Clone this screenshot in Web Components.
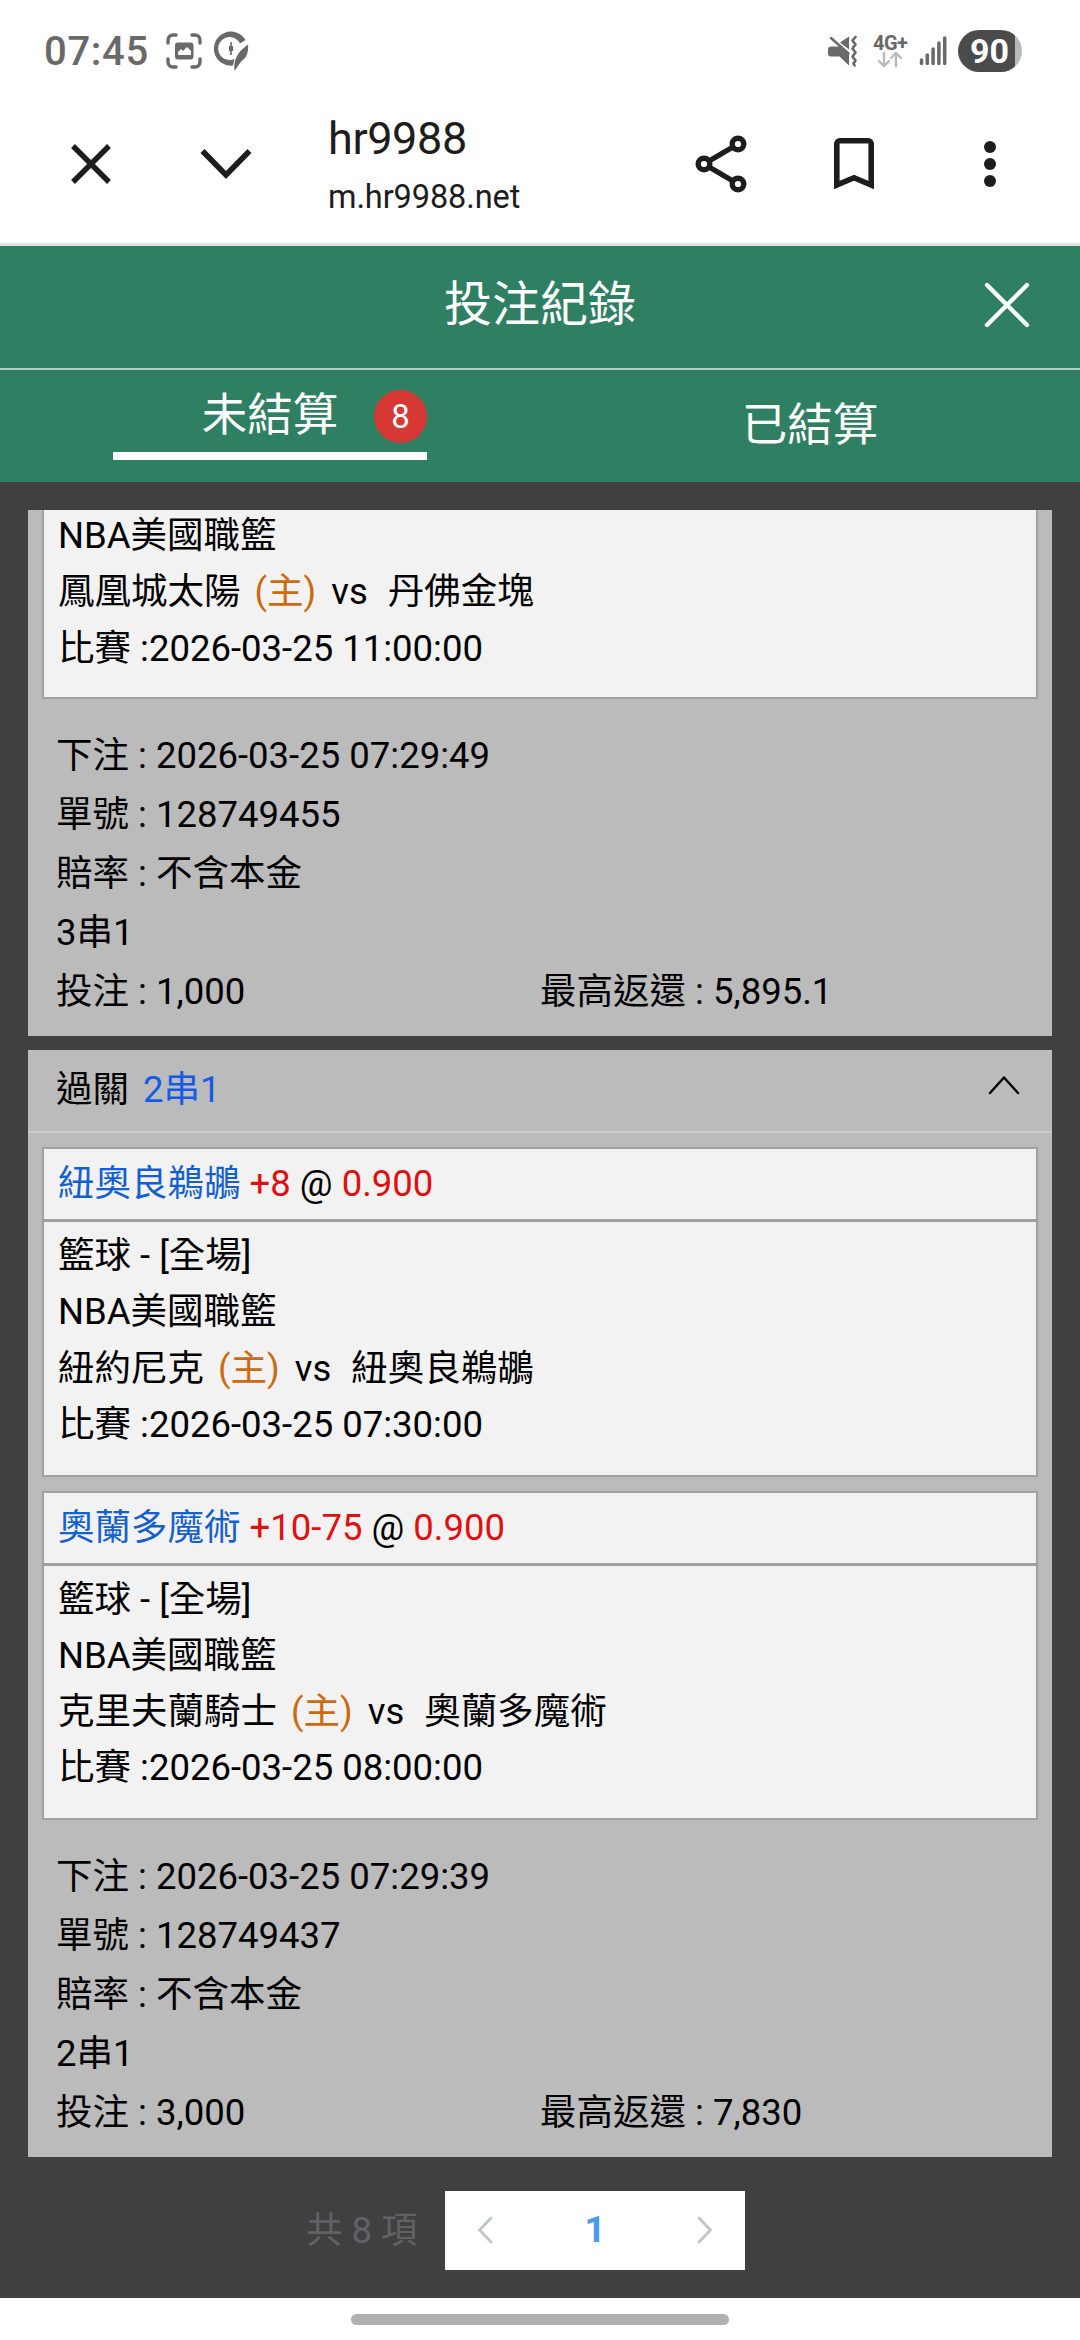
<!DOCTYPE html>
<html lang="zh-Hant">
<head>
<meta charset="utf-8">
<title>hr9988</title>
<style>
  html, body {
    margin: 0;
    height: 100%;
  }

  body {
    font-family: Roboto, "Noto Sans CJK TC", sans-serif;
    background: #fff;
    overflow: hidden;
  }
</style>
</head>
<body>
<bet-app></bet-app>

<script>
const BETS = [
  {
    partial: true,
    legs: [
      {
        league: "NBA美國職籃",
        home: "鳳凰城太陽",
        away: "丹佛金塊",
        date: "2026-03-25 11:00:00"
      }
    ],
    placed: "2026-03-25 07:29:49",
    order: "128749455",
    combo: "3串1",
    stake: "1,000",
    payout: "5,895.1"
  },
  {
    legs: [
      {
        pick: "紐奧良鵜鶘",
        line: "+8",
        odds: "0.900",
        sport: "籃球 - [全場]",
        league: "NBA美國職籃",
        home: "紐約尼克",
        away: "紐奧良鵜鶘",
        date: "2026-03-25 07:30:00"
      },
      {
        pick: "奧蘭多魔術",
        line: "+10-75",
        odds: "0.900",
        sport: "籃球 - [全場]",
        league: "NBA美國職籃",
        home: "克里夫蘭騎士",
        away: "奧蘭多魔術",
        date: "2026-03-25 08:00:00"
      }
    ],
    placed: "2026-03-25 07:29:39",
    order: "128749437",
    combo: "2串1",
    stake: "3,000",
    payout: "7,830"
  }
];

class BaseElement extends HTMLElement {
  constructor() {
    super();
    this.attachShadow({ mode: "open" });
  }

  connectedCallback() {
    this.shadowRoot.innerHTML = /* html */`
    <style>${this.constructor.styles}</style>
    ${this.render()}`;
  }
}

class StatusBar extends BaseElement {
  static get styles() {
    return /* css */`
      :host {
        display: flex;
        align-items: center;
        box-sizing: border-box;
        height: 102px;
        padding: 0 58px 0 44px;
        color: #696969;
      }

      svg {
        display: block;
        flex: none;
      }

      .time {
        width: 122px;
        padding-top: 2px;
        font-size: 40px;
        font-weight: 500;
        letter-spacing: 0.7px;
        line-height: 42px;
      }

      .bubble {
        margin-left: 11px;
      }

      .mute {
        margin-left: auto;
      }

      .network {
        width: 36px;
        margin-left: 15px;
        font-size: 20px;
        font-weight: 700;
        line-height: 18px;
        letter-spacing: -0.5px;
      }

      .signal {
        margin: 0 10px 0 10px;
      }

      .battery {
        width: 64px;
        height: 42px;
        border-radius: 21px;
        background: linear-gradient(90deg, #4b4b4b 57px, #b9b9b9 57px);
        color: #fff;
        font-size: 34px;
        font-weight: 700;
        line-height: 43px;
        text-indent: 12px;
      }
    `;
  }

  render() {
    return /* html */`
    <span class="time">07:45</span>
    <svg width="36" height="36" viewBox="0 0 36 36" fill="none">
      <path d="M2 10V7a5 5 0 0 1 5-5h3M26 2h3a5 5 0 0 1 5 5v3M34 26v3a5 5 0 0 1-5 5h-3M10 34H7a5 5 0 0 1-5-5v-3" stroke="currentColor" stroke-width="3.4" stroke-linecap="round"/>
      <rect x="9" y="9.500" width="18.500" height="17" rx="3" fill="currentColor"/>
      <path d="M12 22v-3l3-3 2 2 4-4 4 4v4z" fill="#fff"/>
    </svg>
    <svg class="bubble" width="36" height="40" viewBox="0 0 36 40">
      <path d="M32.500 9A17 17 0 1 0 20 34.500L21.500 28A11.500 11.500 0 1 1 27 12.500z" fill="currentColor"/>
      <path d="M35 13.500c1 8-2 14-7 17l-6.500 9.500c-1-10 1.500-18 13.500-26.500z" fill="currentColor"/>
      <path d="M18 11v13M16.800 15v5M19.200 15v5" stroke="currentColor" stroke-width="1.600"/>
    </svg>
    <svg class="mute" width="31" height="32" viewBox="0 0 31 32">
      <path d="M4 11.500h8L22 18v12.500L12.500 21.500H4q-3 0-3-3v-4q0-3 3-3zM13 7.500l9-6v13z" fill="currentColor"/>
      <path d="M4 3l17.500 15.500" stroke="currentColor" stroke-width="2.400" stroke-linecap="round"/>
      <path d="M28.500 2l-3 3.500 3 4-3 4 3 4-3 4 3 4-2 3 1 2" fill="none" stroke="currentColor" stroke-width="2.600" stroke-linecap="round" stroke-linejoin="round"/>
    </svg>
    <div class="network">4G+
      <svg width="36" height="16" viewBox="0 0 36 16" fill="none" stroke="#b9b9b9" stroke-width="2.400" stroke-linecap="round">
        <path d="M11 1v13M6 9l5 5 5-5M23 14V1M18 6l5-5 5 5"/>
      </svg>
    </div>
    <svg class="signal" width="29" height="30" viewBox="0 0 29 30" stroke="currentColor" stroke-width="3.500" stroke-linecap="round">
      <path d="M2.500 24v3.500M8.300 19v8.500M14.100 13v14.500M19.900 7v20.500M25.700 2v25.500"/>
    </svg>
    <div class="battery">90</div>`;
  }
}

class BrowserBar extends BaseElement {
  static get styles() {
    return /* css */`
      :host {
        display: flex;
        align-items: center;
        box-sizing: border-box;
        height: 144px;
        padding: 0 81px 17px 71px;
        border-bottom: 3px solid #dfe3e3;
        color: #1d1d1d;
      }

      svg {
        display: block;
        flex: none;
      }

      .down {
        margin-left: 89px;
      }

      .page {
        flex: 1;
        margin-left: 76px;
        padding-top: 8px;
      }

      .title {
        font-size: 45px;
        line-height: 58px;
        letter-spacing: -0.4px;
      }

      .host {
        font-size: 32.5px;
        line-height: 58px;
        letter-spacing: -0.1px;
      }

      .mark {
        margin: 0 107px 0 87px;
      }
    `;
  }

  render() {
    return /* html */`
    <svg width="40" height="40" viewBox="0 0 40 40" stroke="currentColor" stroke-width="5.400">
      <path d="M2 2l36 36M38 2L2 38"/>
    </svg>
    <svg class="down" width="52" height="32" viewBox="0 0 52 32" fill="none" stroke="currentColor" stroke-width="5.600">
      <path d="M2.500 3L26 27 49.500 3"/>
    </svg>
    <div class="page">
      <div class="title">hr9988</div>
      <div class="host">m.hr9988.net</div>
    </div>
    <svg width="52" height="58" viewBox="0 0 52 58" fill="none" stroke="currentColor" stroke-width="5.400">
      <path d="M9 29l34-20M9 29l34 20"/>
      <g fill="#fff">
        <circle cx="9" cy="29" r="5.800"/>
        <circle cx="43" cy="9" r="5.800"/>
        <circle cx="43" cy="49" r="5.800"/>
      </g>
    </svg>
    <svg class="mark" width="40" height="52" viewBox="0 0 40 52" fill="none" stroke="currentColor" stroke-width="5.600">
      <path d="M2.800 47V5.800a3 3 0 0 1 3-3h28.400a3 3 0 0 1 3 3V47L20 39.700z"/>
    </svg>
    <svg width="18" height="50" viewBox="0 0 18 50" fill="currentColor">
      <circle cx="9" cy="8" r="6"/>
      <circle cx="9" cy="25" r="6"/>
      <circle cx="9" cy="42" r="6"/>
    </svg>`;
  }
}

class RecordHeader extends BaseElement {
  static get styles() {
    return /* css */`
      :host {
        display: grid;
        grid-template-columns: 1fr auto 1fr;
        align-items: center;
        box-sizing: border-box;
        height: 124px;
        padding-bottom: 4px;
        border-bottom: 2px solid #afd0c3;
        background: #2f7f63;
        color: #fff;
      }

      .title {
        grid-column: 2;
        font-size: 48px;
        line-height: 70px;
      }

      svg {
        display: block;
        justify-self: end;
        margin-right: 49px;
      }
    `;
  }

  render() {
    return /* html */`
    <div class="title"><slot></slot></div>
    <svg width="48" height="48" viewBox="0 0 48 48" stroke="currentColor" stroke-width="4.400" stroke-linecap="round">
      <path d="M4 4l40 40M44 4L4 44"/>
    </svg>`;
  }
}

class RecordTabs extends BaseElement {
  static get styles() {
    return /* css */`
      :host {
        display: grid;
        grid-template-columns: 1fr 1fr;
        height: 112px;
        background: #2f7f63;
        color: #fff;
        font-size: 45.5px;
      }

      .tab {
        display: flex;
        align-items: center;
        justify-content: center;
        padding-bottom: 10px;
      }

      .active {
        box-sizing: border-box;
        width: 314px;
        height: 90px;
        margin-left: 113px;
        padding-bottom: 0;
        border-bottom: 8px solid #fff;
        position: relative;
      }

      .badge {
        position: absolute;
        top: 20px;
        right: 0;
        width: 53px;
        height: 53px;
        border-radius: 50%;
        background: #d63833;
        font-size: 33px;
        line-height: 53px;
        text-align: center;
      }
    `;
  }

  render() {
    return /* html */`
    <div class="tab active">未結算<span class="badge">8</span></div>
    <div class="tab">已結算</div>`;
  }
}

class BetLeg extends BaseElement {
  static get styles() {
    return /* css */`
      :host {
        display: block;
        margin: 0 14px;
        border: 2px solid #a0a0a0;
        background: #f2f2f2;
      }

      :host([partial]) {
        border-top: 0;
      }

      .pick {
        height: 70px;
        padding-left: 14px;
        border-bottom: 3px solid #a0a0a0;
        line-height: 69px;
      }

      .team {
        color: #1560d0;
      }

      .odds {
        color: #e01010;
      }

      .body {
        padding: 6px 14px 21.5px;
        line-height: 56.25px;
      }

      :host([partial]) .body {
        height: 189px;
        padding: 0 14px;
        margin-top: -2px;
      }

      .home {
        margin: 0 15px 0 14px;
        color: #cb6a10;
      }

      .away {
        margin-left: 20px;
      }
    `;
  }

  render() {
    const { pick, line, odds, sport, league, home, away, date } = this.data;
    const head = pick ? `<div class="pick"><span class="team">${pick}</span> <span class="odds">${line}</span> @ <span class="odds">${odds}</span></div>` : "";
    return /* html */`
    ${head}
    <div class="body">
      ${sport ? `<div>${sport}</div>` : ""}
      <div>${league}</div>
      <div>${home}<span class="home">(主)</span>vs<span class="away">${away}</span></div>
      <div>比賽 :${date}</div>
    </div>`;
  }
}

class BetCard extends BaseElement {
  static get styles() {
    return /* css */`
      :host {
        display: block;
        background: #bbb;
      }

      .head {
        display: flex;
        justify-content: space-between;
        align-items: center;
        height: 81px;
        margin-bottom: 14px;
        padding: 0 32px 0 28px;
        border-bottom: 2px solid #cbcbcb;
        line-height: 72px;
      }

      .head > div {
        margin-bottom: 2px;
      }

      .combo {
        margin-left: 14px;
        color: #145ce6;
      }

      svg {
        display: block;
        margin-bottom: 11px;
      }

      .legs {
        display: grid;
        gap: 14px;
      }

      .info {
        padding: 28px 28px 14.5px;
        line-height: 58.9px;
      }

      .row {
        display: grid;
        grid-template-columns: 1fr 1fr;
      }
    `;
  }

  connectedCallback() {
    super.connectedCallback();
    const legs = this.shadowRoot.querySelector(".legs");
    this.data.legs.forEach(data => {
      const leg = document.createElement("bet-leg");
      leg.data = data;
      leg.toggleAttribute("partial", !data.pick);
      legs.append(leg);
    });
  }

  render() {
    const { partial, placed, order, combo, stake, payout } = this.data;
    const head = /* html */`
    <div class="head">
      <div>過關<span class="combo">${combo}</span></div>
      <svg width="32" height="20" viewBox="0 0 32 20" fill="none" stroke="#000" stroke-width="2.500" stroke-linecap="round" stroke-linejoin="round">
        <path d="M2 18L16 2.500 30 18"/>
      </svg>
    </div>`;
    return /* html */`
    ${partial ? "" : head}
    <div class="legs"></div>
    <div class="info">
      <div>下注 : ${placed}</div>
      <div>單號 : ${order}</div>
      <div>賠率 : 不含本金</div>
      <div>${combo}</div>
      <div class="row"><span>投注 : ${stake}</span><span>最高返還 : ${payout}</span></div>
    </div>`;
  }
}

class RecordPager extends BaseElement {
  static get styles() {
    return /* css */`
      :host {
        display: flex;
        align-items: center;
        height: 79px;
        margin: 34px 0 28px 278px;
      }

      .total {
        width: 139px;
        color: #606266;
        font-size: 36.5px;
        line-height: 74px;
      }

      .pages {
        display: flex;
        align-items: center;
        justify-content: space-between;
        box-sizing: border-box;
        width: 300px;
        height: 79px;
        padding: 0 32px 2px;
        background: #fff;
        color: #c0c4cc;
      }

      .current {
        color: #4a9bec;
        font-size: 37px;
        font-weight: 700;
      }
    `;
  }

  render() {
    return /* html */`
    <span class="total">共 8 項</span>
    <div class="pages">
      <svg width="16" height="28" viewBox="0 0 16 28" fill="none" stroke="currentColor" stroke-width="2.800" stroke-linecap="round">
        <path d="M14 2L2.500 14 14 26"/>
      </svg>
      <span class="current">1</span>
      <svg width="16" height="28" viewBox="0 0 16 28" fill="none" stroke="currentColor" stroke-width="2.800" stroke-linecap="round">
        <path d="M2 2l11.500 12L2 26"/>
      </svg>
    </div>`;
  }
}

class BetApp extends BaseElement {
  static get styles() {
    return /* css */`
      :host {
        display: flex;
        flex-direction: column;
        height: 2340px;
      }

      main {
        height: 1816px;
        padding: 0 28px;
        border-top: 28px solid #404040;
        box-sizing: border-box;
        background: #404040;
        font-size: 36.5px;
        color: #000;
      }

      .list {
        display: grid;
        gap: 14px;
        overflow: hidden;
      }

      .nav {
        width: 378px;
        height: 11px;
        margin: 16px auto 0;
        border-radius: 6px;
        background: #b0b0b0;
      }
    `;
  }

  connectedCallback() {
    super.connectedCallback();
    const list = this.shadowRoot.querySelector(".list");
    BETS.forEach(data => {
      const card = document.createElement("bet-card");
      card.data = data;
      list.append(card);
    });
  }

  render() {
    return /* html */`
    <status-bar></status-bar>
    <browser-bar></browser-bar>
    <record-header>投注紀錄</record-header>
    <record-tabs></record-tabs>
    <main>
      <div class="list"></div>
      <record-pager></record-pager>
    </main>
    <div class="nav"></div>`;
  }
}

customElements.define("status-bar", StatusBar);
customElements.define("browser-bar", BrowserBar);
customElements.define("record-header", RecordHeader);
customElements.define("record-tabs", RecordTabs);
customElements.define("bet-leg", BetLeg);
customElements.define("bet-card", BetCard);
customElements.define("record-pager", RecordPager);
customElements.define("bet-app", BetApp);
</script>
</body>
</html>
